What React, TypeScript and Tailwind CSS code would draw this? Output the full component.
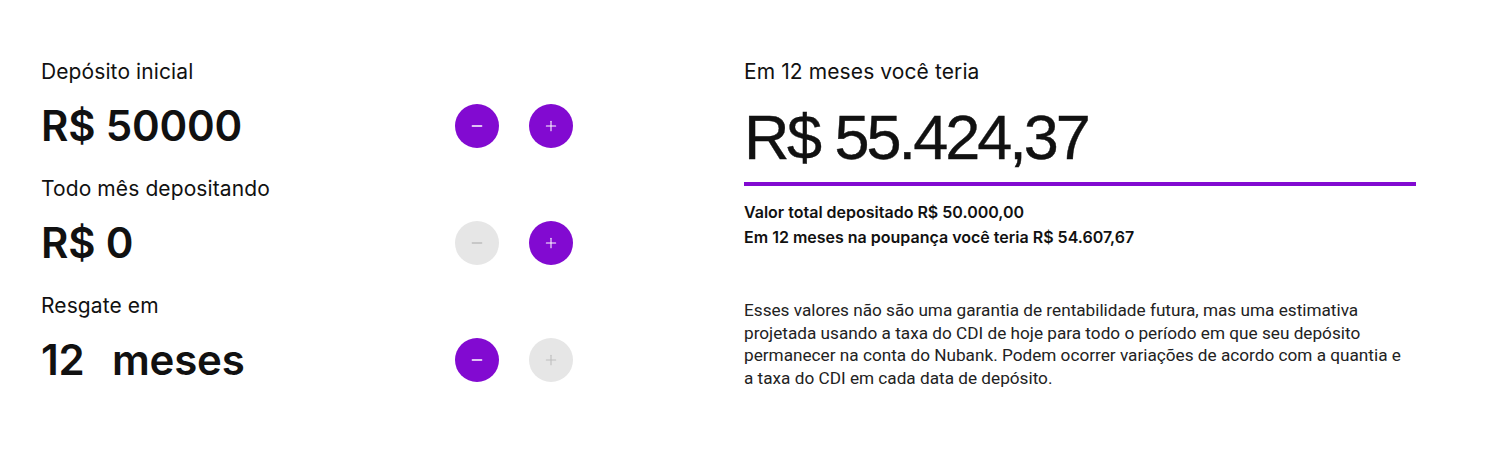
import { Minus, Plus } from "lucide-react";

type Row = {
	label: string;
	value: React.ReactNode;
	canMinus: boolean;
	canPlus: boolean;
};

function StepButton({ kind, enabled }: { kind: "minus" | "plus"; enabled: boolean }) {
	const Icon = kind === "minus" ? Minus : Plus;
	return (
		<button
			className={
				enabled
					? "w-[44px] h-[44px] rounded-full bg-[#820ad1] text-white flex items-center justify-center"
					: "w-[44px] h-[44px] rounded-full bg-[#e6e6e6] text-[#bdbdbd] flex items-center justify-center"
			}
		>
			<Icon size={16} strokeWidth={kind === "minus" ? 2.2 : 1.6} />
		</button>
	);
}

const rows: Row[] = [
	{ label: "Depósito inicial", value: "R$ 50000", canMinus: true, canPlus: true },
	{ label: "Todo mês depositando", value: "R$ 0", canMinus: false, canPlus: true },
	{
		label: "Resgate em",
		value: (
			<>
				<span className="inline-block w-[71px]">12</span>meses
			</>
		),
		canMinus: true,
		canPlus: false,
	},
];

export default function App() {
	return (
		<div className="w-[1500px] h-[461px] bg-white text-[#111] font-['Inter',sans-serif] flex px-[41px] pt-[58px]">
			<div className="w-[532px] flex flex-col">
				{rows.map((row) => (
					<div key={row.label} className="h-[117px] flex flex-col">
						<p className="text-[21px] leading-[28px] tracking-[0.1px]">{row.label}</p>
						<div className="flex items-center justify-between mt-[12px]">
							<span className="text-[42px] leading-[56px] font-semibold tracking-[-0.2px]">
								{row.value}
							</span>
							<div className="flex gap-[30px]">
								<StepButton kind="minus" enabled={row.canMinus} />
								<StepButton kind="plus" enabled={row.canPlus} />
							</div>
						</div>
					</div>
				))}
			</div>
			<div className="ml-[171px] w-[672px] flex flex-col">
				<p className="text-[21px] leading-[28px] tracking-[0.1px]">Em 12 meses você teria</p>
				<p className="flex gap-[15px] text-[63px] leading-[80px] font-['Liberation_Sans',Arial,sans-serif] [-webkit-text-stroke:0.4px_#111] mt-[11px]">
					<span className="tracking-[-2.5px]">R$</span>
					<span className="tracking-[-3px]">55.424,37</span>
				</p>
				<div className="h-[4px] bg-[#820ad1] mt-[5px]" />
				<div className="mt-[14px] text-[16px] leading-[25px] font-semibold">
					<p>Valor total depositado R$ 50.000,00</p>
					<p>Em 12 meses na poupança você teria R$ 54.607,67</p>
				</div>
				<p className="mt-[49px] text-[17.2px] leading-[22.5px] font-['Roboto',sans-serif] text-[#222]">
					Esses valores não são uma garantia de rentabilidade futura, mas uma estimativa
					<br />
					projetada usando a taxa do CDI de hoje para todo o período em que seu depósito
					<br />
					permanecer na conta do Nubank. Podem ocorrer variações de acordo com a quantia e
					<br />a taxa do CDI em cada data de depósito.
				</p>
			</div>
		</div>
	);
}
